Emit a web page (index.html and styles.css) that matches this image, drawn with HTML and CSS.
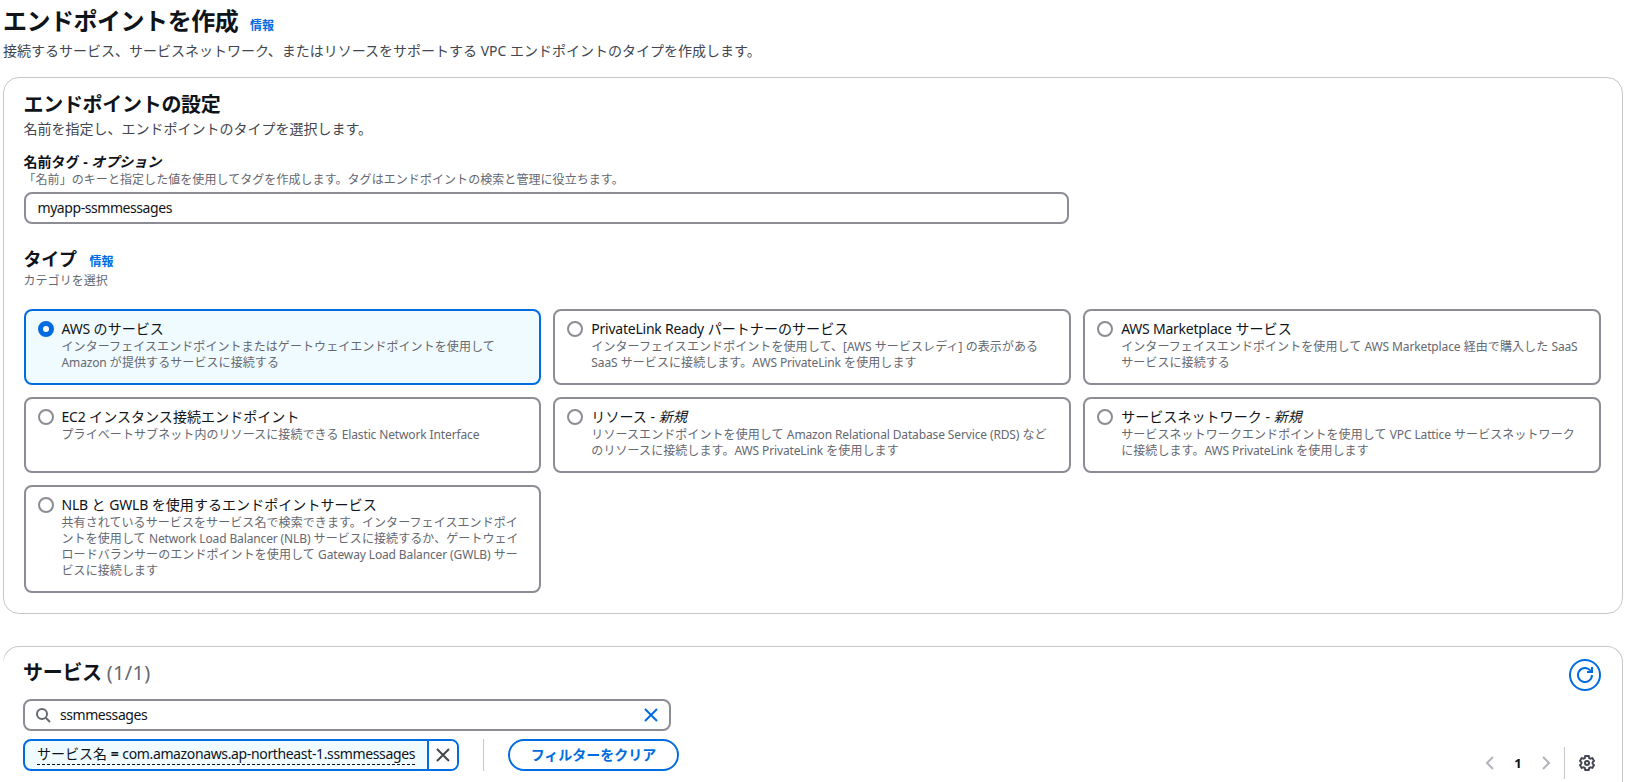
FILE: index.html
```html
<!DOCTYPE html>
<html lang="ja">
<head>
  <meta charset="UTF-8" />
  <title>エンドポイントを作成</title>
  <link rel="stylesheet" href="styles.css">
</head>
<body>

<header class="page-header">
  <h1>エンドポイントを作成 <a class="info">情報</a></h1>
  <p>接続するサービス、サービスネットワーク、またはリソースをサポートする VPC エンドポイントのタイプを作成します。</p>
</header>

<section class="container settings">
  <h2>エンドポイントの設定</h2>
  <p class="subtitle">名前を指定し、エンドポイントのタイプを選択します。</p>

  <label class="label" for="name">名前タグ - <i>オプション</i></label>
  <div class="hint">「名前」のキーと指定した値を使用してタグを作成します。タグはエンドポイントの検索と管理に役立ちます。</div>
  <input class="name-input" type="text" id="name" value="myapp-ssmmessages" />

  <h3>タイプ <a class="info">情報</a></h3>
  <div class="hint">カテゴリを選択</div>

  <div class="tiles">
    <div class="tile selected">
      <span class="radio"></span>
      <div>
        <div class="title"><span class="en">AWS</span> のサービス</div>
        <div class="description">インターフェイスエンドポイントまたはゲートウェイエンドポイントを使用して<br><span class="en">Amazon</span> が提供するサービスに接続する</div>
      </div>
    </div>
    <div class="tile">
      <span class="radio"></span>
      <div>
        <div class="title"><span class="en">PrivateLink Ready</span> パートナーのサービス</div>
        <div class="description">インターフェイスエンドポイントを使用して、[<span class="en">AWS</span> サービスレディ] の表示がある<br><span class="en">SaaS</span> サービスに接続します。<span class="en">AWS PrivateLink</span> を使用します</div>
      </div>
    </div>
    <div class="tile">
      <span class="radio"></span>
      <div>
        <div class="title"><span class="en">AWS Marketplace</span> サービス</div>
        <div class="description">インターフェイスエンドポイントを使用して <span class="en">AWS Marketplace</span> 経由で購入した <span class="en">SaaS</span><br>サービスに接続する</div>
      </div>
    </div>
    <div class="tile">
      <span class="radio"></span>
      <div>
        <div class="title"><span class="en">EC2</span> インスタンス接続エンドポイント</div>
        <div class="description">プライベートサブネット内のリソースに接続できる <span class="en">Elastic Network Interface</span></div>
      </div>
    </div>
    <div class="tile">
      <span class="radio"></span>
      <div>
        <div class="title">リソース - <i>新規</i></div>
        <div class="description">リソースエンドポイントを使用して <span class="en">Amazon Relational Database Service (RDS)</span> など<br>のリソースに接続します。<span class="en">AWS PrivateLink</span> を使用します</div>
      </div>
    </div>
    <div class="tile">
      <span class="radio"></span>
      <div>
        <div class="title">サービスネットワーク - <i>新規</i></div>
        <div class="description">サービスネットワークエンドポイントを使用して <span class="en">VPC Lattice</span> サービスネットワーク<br>に接続します。<span class="en">AWS PrivateLink</span> を使用します</div>
      </div>
    </div>
    <div class="tile">
      <span class="radio"></span>
      <div>
        <div class="title"><span class="en">NLB</span> と <span class="en">GWLB</span> を使用するエンドポイントサービス</div>
        <div class="description">共有されているサービスをサービス名で検索できます。インターフェイスエンドポイ<br>ントを使用して <span class="en">Network Load Balancer (NLB)</span> サービスに接続するか、ゲートウェイ<br>ロードバランサーのエンドポイントを使用して <span class="en">Gateway Load Balancer (GWLB)</span> サー<br>ビスに接続します</div>
      </div>
    </div>
  </div>
</section>

<section class="container services">
  <div class="services-header">
    <h2>サービス <span class="count">(1/1)</span></h2>
    <button class="refresh">
      <svg width="16" height="16" viewBox="0 0 16 16"><path d="M15 8a7 7 0 1 1-2-4.900L15 5M15 0v5h-5" /></svg>
    </button>
  </div>

  <div class="search">
    <svg class="search-icon" width="16" height="16" viewBox="0 0 16 16"><circle cx="7" cy="7" r="5" /><path d="m11 11 4 4" /></svg>
    <input type="text" value="ssmmessages" />
    <svg class="clear-icon" width="16" height="16" viewBox="0 0 16 16"><path d="m2 2 12 12M14 2 2 14" /></svg>
  </div>

  <div class="filters">
    <div class="token">
      <div class="token-text"><span class="token-label">サービス名 <b>=</b> <span class="value">com.amazonaws.ap-northeast-1.ssmmessages</span></span></div>
      <div class="token-remove">
        <svg width="16" height="16" viewBox="0 0 16 16"><path d="m2 2 12 12M14 2 2 14" /></svg>
      </div>
    </div>
    <span class="divider"></span>
    <button class="clear-filters">フィルターをクリア</button>

    <div class="pagination">
      <svg class="arrow" width="16" height="16" viewBox="0 0 16 16"><path d="M11 2 5 8l6 6" /></svg>
      <span class="page">1</span>
      <svg class="arrow" width="16" height="16" viewBox="0 0 16 16"><path d="m5 2 6 6-6 6" /></svg>
      <span class="divider"></span>
      <svg class="gear" width="16" height="16" viewBox="0 0 16 16"><path d="M6.300 1h3.400l.5 2 1.200.7 2-.6 1.600 2.800-1.400 1.400v1.400l1.400 1.400-1.600 2.800-2-.6-1.200.7-.5 2H6.300l-.5-2-1.200-.7-2 .6L1 10.100l1.400-1.400V7.300L1 5.900l1.600-2.800 2 .6L5.800 3z" /><circle cx="8" cy="8" r="2" /></svg>
    </div>
  </div>
</section>

</body>
</html>
```

FILE: styles.css
```css
* {
  box-sizing: border-box;
}

body {
  font-family: 'Noto Sans', 'Noto Sans CJK JP', sans-serif;
  font-size: 14px;
  line-height: 20px;
  color: #0f141a;
  background-color: #fff;
  margin: 0;
  height: 782px;
  overflow: hidden;
}

h1, h2, h3, p {
  margin: 0;
}

svg {
  display: block;
  fill: none;
  stroke: currentColor;
  stroke-width: 2;
}

input, button {
  font-family: inherit;
  font-size: 14px;
  color: inherit;
  background: none;
  border: none;
  padding: 0;
  outline: none;
}

input {
  letter-spacing: -0.43px;
}

.page-header {
  padding: 6px 3px 0;
  height: 77px;
}

h1 {
  font-size: 24px;
  line-height: 30px;
  letter-spacing: -0.48px;
}

.page-header p {
  color: #424650;
}

.info {
  margin-left: 6px;
  font-size: 12px;
  font-weight: 700;
  letter-spacing: 0;
  color: #006ce0;
}

.container {
  margin: 0 5px 0 3px;
  border: 1px solid #c6c6cd;
  border-radius: 16px;
}

.settings {
  height: 537px;
  padding: 15px 21px 0 19.5px;
}

h2 {
  font-size: 20px;
  line-height: 24px;
  letter-spacing: -0.3px;
}

.subtitle {
  margin-top: 2px;
  color: #424650;
}

.label {
  display: block;
  margin-top: 13px;
  font-weight: 700;
}

.hint {
  font-size: 12px;
  line-height: 16px;
  letter-spacing: 0.06px;
  color: #656871;
}

.name-input {
  display: block;
  width: 1045px;
  height: 32px;
  margin-top: 4px;
  padding: 0 12px 2px;
  border: 2px solid #8c8c94;
  border-radius: 8px;
}

h3 {
  margin-top: 23px;
  font-size: 18px;
  line-height: 24px;
  letter-spacing: -0.2px;
}

h3 .info {
  margin-left: 8px;
}

h3 + .hint {
  margin-top: -1px;
}

.tiles {
  display: grid;
  grid-template-columns: repeat(3, 1fr);
  gap: 12px;
  margin-top: 20px;
}

.tile {
  display: flex;
  gap: 8px;
  padding: 8px 12px 12px;
  border: 2px solid #8c8c94;
  border-radius: 8px;
  white-space: nowrap;
}

.tile.selected {
  border-color: #006ce0;
  background-color: #f0fbff;
}

.radio {
  flex: none;
  width: 16px;
  height: 16px;
  margin-top: 2px;
  border: 2px solid #8c8c94;
  border-radius: 50%;
  background-color: #fff;
}

.selected .radio {
  border: 5px solid #006ce0;
}

.title {
  letter-spacing: 0.06px;
}

.title .en {
  letter-spacing: -0.24px;
}

.description {
  font-size: 12px;
  line-height: 16px;
  letter-spacing: 0.08px;
  color: #656871;
}

.description .en {
  letter-spacing: -0.13px;
}

.services {
  position: relative;
  height: 170px;
  margin-top: 32px;
  padding: 12px 21px 0 19px;
  border-bottom: none;
  border-radius: 16px 16px 0 0;
}

/* the left edge fades out just below the corner */
.services::before {
  content: "";
  position: absolute;
  top: 6px;
  left: -1px;
  bottom: 0;
  width: 3px;
  background: linear-gradient(transparent, #fff 10px);
}

.services-header {
  display: flex;
  justify-content: space-between;
}

.services-header h2 {
  margin-top: 2px;
}

.count {
  font-weight: 400;
  letter-spacing: 0.3px;
  color: #656871;
}

.refresh {
  display: flex;
  align-items: center;
  justify-content: center;
  width: 32px;
  height: 32px;
  border: 2px solid #006ce0;
  border-radius: 50%;
  color: #006ce0;
}

.search {
  display: flex;
  align-items: center;
  width: 648px;
  height: 32px;
  margin-top: 8px;
  padding: 0 10px;
  border: 2px solid #8c8c94;
  border-radius: 8px;
}

.search input {
  flex: 1;
  margin-left: 9px;
  padding-bottom: 2px;
}

.search-icon {
  color: #656871;
}

.clear-icon {
  color: #006ce0;
}

.filters {
  display: flex;
  height: 40px;
  margin-top: 8px;
}

.token {
  display: flex;
  width: 436px;
  height: 32px;
  border: 2px solid #006ce0;
  border-radius: 8px;
  background-color: #f0fbff;
}

.token-text {
  flex: 1;
  padding: 3px 0 0 12px;
  white-space: nowrap;
}

.token-label {
  display: inline-block;
  border-bottom: 1px dashed #0f141a;
}

.value {
  letter-spacing: -0.36px;
}

.token-remove {
  display: flex;
  align-items: center;
  justify-content: center;
  width: 30px;
  border-left: 2px solid #006ce0;
  border-radius: 0 6px 6px 0;
  background-color: #fff;
  color: #424650;
}

.divider {
  width: 1px;
  height: 32px;
  margin-left: 24px;
  background-color: #c6c6cd;
}

.clear-filters {
  width: 171px;
  height: 32px;
  margin-left: 24px;
  padding-bottom: 2px;
  border: 2px solid #006ce0;
  border-radius: 16px;
  color: #006ce0;
  font-weight: 700;
}

.pagination {
  display: flex;
  align-items: center;
  height: 32px;
  margin: 8px 6px 0 auto;
}

.pagination .divider {
  margin: 0 14px 0 10px;
}

.arrow {
  color: #b4b4bb;
}

.page {
  width: 40px;
  text-align: center;
  font-size: 13px;
  font-weight: 700;
}

.gear {
  color: #424650;
}
```
